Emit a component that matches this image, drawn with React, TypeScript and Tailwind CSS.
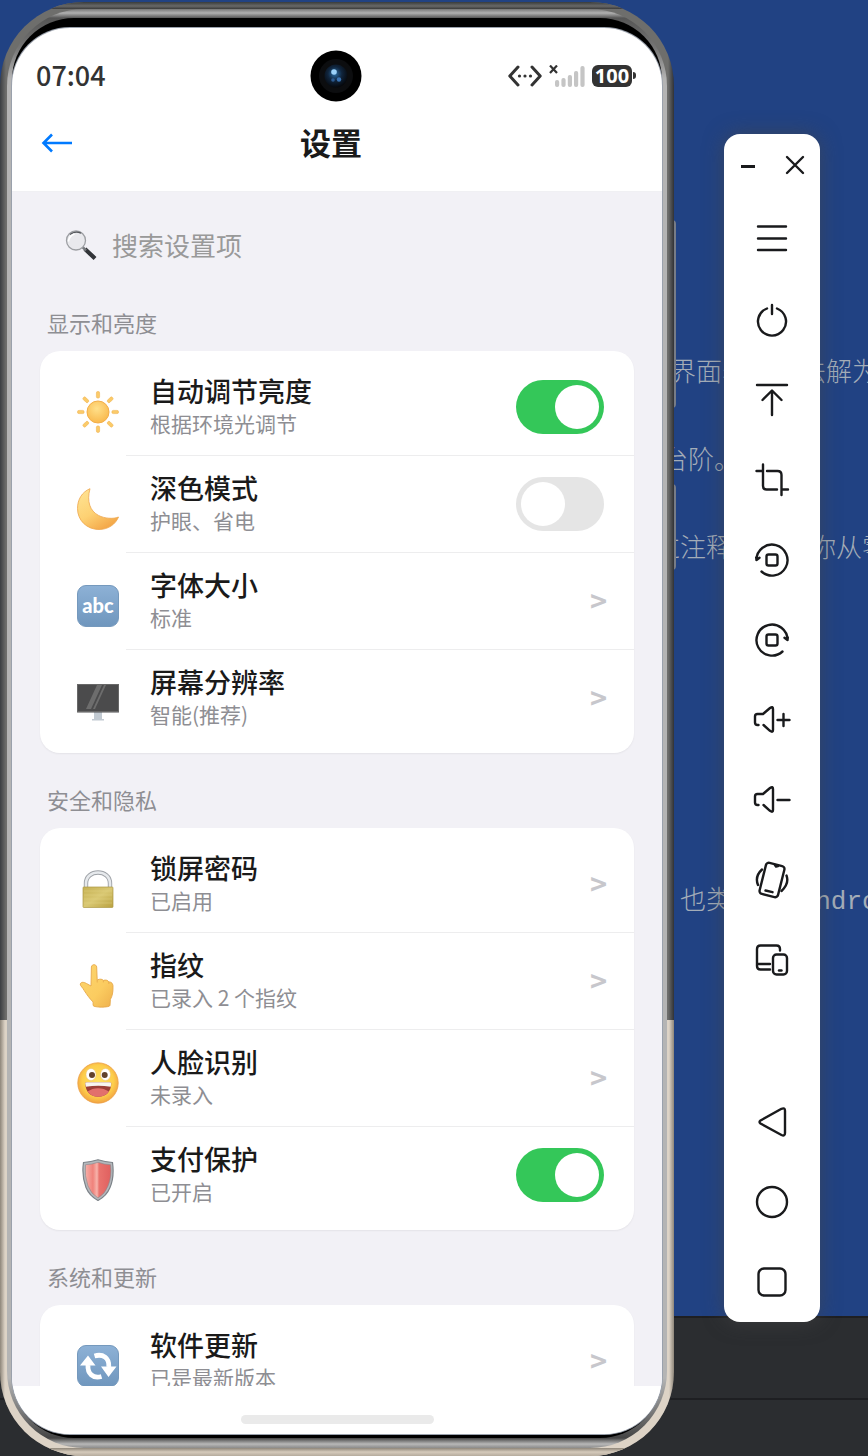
import React, { useState } from 'react';

interface SettingItem {
  id: string;
  title: string;
  desc: string;
  icon: React.ReactNode;
  toggle?: boolean;
}

interface SettingGroup {
  name: string;
  items: SettingItem[];
}

const SunIcon = () => (
  <svg viewBox="0 0 42 42" className="h-[42px] w-[42px]" aria-hidden="true">
    <defs>
      <radialGradient id="sun" cx="45%" cy="35%" r="65%">
        <stop offset="0" stopColor="#ffe08a" />
        <stop offset="1" stopColor="#f9b94d" />
      </radialGradient>
    </defs>
    <circle cx="21" cy="21" r="11" fill="url(#sun)" stroke="#f3ae49" strokeWidth="1" />
    {[0, 45, 90, 135, 180, 225, 270, 315].map((deg) => (
      <rect key={deg} x="19.4" y="0.5" width="3.2" height="6.6" rx="1.4" fill="#fbcb68" stroke="#f0b455" strokeWidth="0.6" transform={`rotate(${deg} 21 21)`} />
    ))}
  </svg>
);

const MoonIcon = () => (
  <svg viewBox="0 0 42 42" className="h-[42px] w-[42px]" aria-hidden="true">
    <defs>
      <linearGradient id="moon" x1="0" y1="0" x2="0.6" y2="1">
        <stop offset="0" stopColor="#ffe596" />
        <stop offset="0.6" stopColor="#fdd173" />
        <stop offset="1" stopColor="#f4a94a" />
      </linearGradient>
    </defs>
    <path d="M13 .7C5 4 .5 11.5 .5 20.5 .5 32.5 10 41.500 22 41.500c9 0 16.500-5 19.500-12.500-5 2.200-14 1.600-20-1.600C13 23 9.500 13.500 13 .7Z" fill="url(#moon)" stroke="#eda64d" strokeWidth="0.8" />
  </svg>
);

const BlueTile: React.FC<{ children: React.ReactNode }> = ({ children }) => (
  <svg viewBox="0 0 42 42" className="h-[42px] w-[42px]" aria-hidden="true">
    <defs>
      <linearGradient id="tile" x1="0" y1="0" x2="0" y2="1">
        <stop offset="0" stopColor="#8db1d6" />
        <stop offset="1" stopColor="#6f96bd" />
      </linearGradient>
    </defs>
    <rect x="0.5" y="0.5" width="41" height="41" rx="8.5" fill="url(#tile)" stroke="#7599bd" />
    {children}
  </svg>
);

const AbcIcon = () => (
  <BlueTile>
    <text x="21" y="28" textAnchor="middle" fill="#fff" fontFamily="Lato, 'Noto Sans', sans-serif" fontWeight="900" fontSize="20">
      abc
    </text>
  </BlueTile>
);

const RefreshIcon = () => (
  <BlueTile>
    <g fill="none" stroke="#fff" strokeWidth="4.8">
      <path d="M17.500 11C26 8.500 32.500 13 31.800 22" />
      <path d="M24.500 31.500C16 34 10.300 28.500 11 20" />
    </g>
    <path d="M3 20.500 11 10.500 18.500 20.500ZM24 21.500H39.500L31.500 32Z" fill="#fff" />
  </BlueTile>
);

const MonitorIcon = () => (
  <svg viewBox="0 0 42 42" className="h-[42px] w-[42px]" aria-hidden="true">
    <path d="M17 30h8v7h2v1.500H15V37h2Z" fill="#c2cad2" />
    <rect x="0" y="2" width="42" height="28.5" rx="0.6" fill="#4b4b4c" />
    <rect x="0.5" y="2.5" width="41" height="27" fill="none" stroke="#686868" />
    <path d="M20 3h5L14 27H9ZM27 3h2L18 27h-2Z" fill="#6d6d6d" />
  </svg>
);

const LockIcon = () => (
  <svg viewBox="0 0 42 42" className="h-[42px] w-[42px]" aria-hidden="true">
    <defs>
      <linearGradient id="brass" x1="0" y1="0" x2="1" y2="1">
        <stop offset="0" stopColor="#c5b052" />
        <stop offset="0.5" stopColor="#d9c873" />
        <stop offset="1" stopColor="#b9a13f" />
      </linearGradient>
    </defs>
    <path d="M9 20V15.500C9 0.800 33 0.800 33 15.500V20" fill="none" stroke="#9da1a6" strokeWidth="4.4" />
    <path d="M9 20V15.500C9 0.800 33 0.800 33 15.500V20" fill="none" stroke="#e6e9ec" strokeWidth="2.6" />
    <rect x="6" y="19" width="30" height="20.5" rx="0.8" fill="url(#brass)" stroke="#ae9a45" strokeWidth="0.7" />
    <path d="M7 23h28M7 27h28M7 31h28M7 35h28" stroke="#e2d38b" strokeWidth="0.4" />
  </svg>
);

const PointIcon = () => (
  <svg viewBox="0 0 42 44" className="h-[44px] w-[42px]" aria-hidden="true">
    <defs>
      <linearGradient id="hand" x1="0" y1="0" x2="1" y2="1">
        <stop offset="0" stopColor="#fcd56e" />
        <stop offset="0.6" stopColor="#fbcc60" />
        <stop offset="1" stopColor="#eeb04c" />
      </linearGradient>
    </defs>
    <path d="M14 22 14.400 3C14.700-.1 19.300-.1 19.700 3L20.200 16c2.600-1.400 5.300-.9 6.200.4 2.400-.8 4.600-.1 5.400 1.500 3.200-.1 4.500 2.200 4.200 5.500 0 5-.6 8.500-2.600 12l-.4 6c0 2.300-16.600 2.300-16.900 0V38C12.500 34.500 9.500 30 7.200 26.500 5.800 23.500 3.200 22 3.200 20c1-2.500 4-1.800 6.300-.5Z" fill="url(#hand)" stroke="#e6a84b" strokeWidth="0.9" />
    <path d="M20.200 16v2.500M26.400 16.400v2M31.800 17.900v2" stroke="#e6a84b" strokeWidth="0.8" />
  </svg>
);

const FaceIcon = () => (
  <svg viewBox="0 0 42 42" className="h-[42px] w-[42px]" aria-hidden="true">
    <defs>
      <radialGradient id="face" cx="50%" cy="45%" r="55%">
        <stop offset="0" stopColor="#ffe263" />
        <stop offset="0.7" stopColor="#fdce4b" />
        <stop offset="1" stopColor="#f2a342" />
      </radialGradient>
    </defs>
    <circle cx="21" cy="21" r="20.2" fill="url(#face)" stroke="#ec9f45" strokeWidth="0.8" />
    <ellipse cx="14" cy="12.5" rx="5" ry="6" fill="#fff" stroke="#e9c07a" strokeWidth="0.5" />
    <ellipse cx="28.5" cy="12.5" rx="5" ry="6" fill="#fff" stroke="#e9c07a" strokeWidth="0.5" />
    <circle cx="15" cy="13" r="3" fill="#62422d" />
    <circle cx="27.7" cy="13" r="3" fill="#62422d" />
    <path d="M8.200 21.500q0-1.300 1.800-1.300h22.500q1.800 0 1.800 1.300C34 29.500 29 34.800 21.200 34.800S8.500 29.500 8.200 21.500Z" fill="#9c3f38" />
    <path d="M8.200 21.500q0-1.300 1.800-1.300h22.500q1.800 0 1.800 1.300l-.6 3.300q-12.500-2-24.800 0Z" fill="#f7f5f0" />
    <path d="M10.500 29.500c6-4.500 15-4.500 21.500 0-2.800 3.700-6.200 5.300-10.800 5.300s-8.200-1.700-10.700-5.300Z" fill="#e2706c" />
  </svg>
);

const ShieldIcon = () => (
  <svg viewBox="0 0 42 42" className="h-[42px] w-[42px]" aria-hidden="true">
    <defs>
      <linearGradient id="shield" x1="0" y1="0" x2="1" y2="0">
        <stop offset="0" stopColor="#f6b0a9" />
        <stop offset="0.3" stopColor="#f0827b" />
        <stop offset="0.46" stopColor="#f7b4ac" />
        <stop offset="0.54" stopColor="#e9736e" />
        <stop offset="1" stopColor="#e0605f" />
      </linearGradient>
    </defs>
    <path d="M6.500 3.500Q14 3 21 .7 28 3 35.500 3.500 37.500 18 33 28.500 29.500 37 21 41.500 12.500 37 9 28.500 4.500 17 6.500 3.500Z" fill="#b4b8bc" stroke="#7d8389" strokeWidth="1.2" />
    <path d="M8.500 5.700Q15 5.500 21 3.300 27 5.500 33.500 5.700 35 18 31 27 28 35 21 39 14 35 11 27 7.200 17 8.500 5.700Z" fill="url(#shield)" stroke="#84898f" strokeWidth="0.6" />
  </svg>
);

const SearchIcon = () => (
  <svg viewBox="0 0 32 30" className="h-[30px] w-[32px] shrink-0" aria-hidden="true">
    <path d="M21.500 20.500 28.500 27" stroke="#333539" strokeWidth="4.2" strokeLinecap="square" />
    <path d="M17.500 17 21 20.500" stroke="#75787c" strokeWidth="2.5" />
    <circle cx="11" cy="10.5" r="9.5" fill="#e9e9ed" stroke="#9d9fa3" strokeWidth="1.3" />
    <path d="M5 4.500Q10 .5 16 3.200" fill="none" stroke="#55585c" strokeWidth="1.4" />
    <path d="M3.500 11.500Q4 6 9.500 4" fill="none" stroke="#fff" strokeWidth="1.5" />
  </svg>
);

const groups: SettingGroup[] = [
  {
    name: '显示和亮度',
    items: [
      { id: 'brightness', title: '自动调节亮度', desc: '根据环境光调节', icon: <SunIcon />, toggle: true },
      { id: 'dark', title: '深色模式', desc: '护眼、省电', icon: <MoonIcon />, toggle: false },
      { id: 'font', title: '字体大小', desc: '标准', icon: <AbcIcon /> },
      { id: 'resolution', title: '屏幕分辨率', desc: '智能(推荐)', icon: <MonitorIcon /> },
    ],
  },
  {
    name: '安全和隐私',
    items: [
      { id: 'password', title: '锁屏密码', desc: '已启用', icon: <LockIcon /> },
      { id: 'fingerprint', title: '指纹', desc: '已录入 2 个指纹', icon: <PointIcon /> },
      { id: 'face', title: '人脸识别', desc: '未录入', icon: <FaceIcon /> },
      { id: 'payment', title: '支付保护', desc: '已开启', icon: <ShieldIcon />, toggle: true },
    ],
  },
  {
    name: '系统和更新',
    items: [{ id: 'update', title: '软件更新', desc: '已是最新版本', icon: <RefreshIcon /> }],
  },
];

const SettingRow: React.FC<{ item: SettingItem; last: boolean }> = ({ item, last }) => {
  const [checked, setChecked] = useState(item.toggle ?? false);

  const content = (
    <>
      <span className="w-[86px] shrink-0 pt-2 pl-[37px]">{item.icon}</span>
      <span
        className={`flex h-full min-w-0 flex-1 items-center justify-between border-b pr-[30px] pl-6 ${
          last ? 'border-transparent' : 'border-[#ededee]'
        }`}
      >
        <span className="flex min-w-0 flex-col whitespace-nowrap">
          <span className="text-[27px] leading-8 font-medium text-[#1a1a1a]">{item.title}</span>
          <span className="text-[21px] leading-8 text-[#8e8e93]">{item.desc}</span>
        </span>
        {item.toggle !== undefined ? (
          <input
            type="checkbox"
            checked={checked}
            onChange={(e) => setChecked(e.target.checked)}
            className="h-[54px] w-[88px] shrink-0 appearance-none rounded-full bg-[#e5e5e5] p-[5px] before:block before:h-11 before:w-11 before:rounded-full before:bg-white before:content-[''] checked:bg-[#34c759] checked:before:ml-[34px]"
          />
        ) : (
          <span className="-mr-[3px] pb-1 text-[29px] leading-8 font-bold text-[#c7c7cc]">&gt;</span>
        )}
      </span>
    </>
  );

  if (item.toggle !== undefined) {
    return <label className="flex h-[97px] items-center">{content}</label>;
  }
  return (
    <button type="button" className="flex h-[97px] w-full items-center text-left">
      {content}
    </button>
  );
};

const StatusBar = () => (
  <div className="grid h-24 grid-cols-[1fr_auto_1fr] items-center pr-[26px] pb-px pl-6">
    <span className="pb-[2px] text-[27px] leading-8 font-medium text-[#333]">07:04</span>
    <svg viewBox="0 0 52 52" className="h-[52px] w-[52px]" aria-hidden="true">
      <defs>
        <radialGradient id="lens" cx="45%" cy="40%" r="60%">
          <stop offset="0" stopColor="#2b6fa8" />
          <stop offset="0.5" stopColor="#10253d" />
          <stop offset="1" stopColor="#06080c" />
        </radialGradient>
      </defs>
      <circle cx="26" cy="26" r="25.5" fill="#000" />
      <circle cx="26" cy="26" r="17" fill="#0c0d0f" />
      <circle cx="26" cy="26" r="11.5" fill="url(#lens)" />
      <circle cx="24" cy="22" r="2.8" fill="#9bd2fa" />
      <circle cx="29" cy="29.5" r="2.2" fill="#3a74b4" />
      <circle cx="23" cy="30" r="1.8" fill="#2b5a90" />
    </svg>
    <div className="flex items-center justify-end gap-[7px]">
      <svg viewBox="0 0 34 22" className="h-[22px] w-[34px]" aria-hidden="true">
        <path d="M10 2 1.800 11 10 20M24 2l8.200 9L24 20" fill="none" stroke="#333" strokeWidth="3" strokeLinecap="round" strokeLinejoin="round" />
        <circle cx="11.5" cy="11" r="1.6" fill="#333" />
        <circle cx="17" cy="11" r="1.6" fill="#333" />
        <circle cx="22.5" cy="11" r="1.6" fill="#333" />
      </svg>
      <svg viewBox="0 0 36 22" className="h-[22px] w-9" aria-hidden="true">
        <path d="M1 .5 8 8M8 .5 1 8" stroke="#333" strokeWidth="2.2" />
        <g fill="#c5c5c5">
          <rect x="6" y="15" width="4.2" height="7" rx="2" />
          <rect x="12.4" y="13" width="4.2" height="9" rx="2" />
          <rect x="18.8" y="10" width="4.2" height="12" rx="2" />
          <rect x="25" y="6" width="4.2" height="16" rx="2" />
          <rect x="31.4" y="1" width="4.2" height="21" rx="2" />
        </g>
      </svg>
      <div className="flex items-center gap-px">
        <span className="flex h-[22px] w-[40px] items-center justify-center rounded-[6px] bg-[#333] font-['Noto_Sans',sans-serif] text-[20px] leading-none font-bold text-white">
          100
        </span>
        <span className="h-[7px] w-[3px] rounded-r-full bg-[#333]" />
      </div>
    </div>
  </div>
);

const Phone = () => {
  const [keyword, setKeyword] = useState('');

  return (
    <div className="relative h-full min-w-0 flex-1 pt-[2px] font-['Noto_Sans_CJK_SC',sans-serif]">
      <span className="absolute top-[220px] -right-[2px] h-[188px] w-1 rounded-r bg-[#777c86]" />
      <span className="absolute top-[484px] -right-[2px] h-[86px] w-1 rounded-r bg-[#777c86]" />
      {/* metal frame */}
      <div className="relative h-full overflow-hidden rounded-[84px] bg-[linear-gradient(90deg,#3b3e42,#6e6e6c_6px,#6e6e6c_calc(100%-6px),#303236)]">
        <div className="absolute inset-x-0 bottom-0 h-[30%] bg-[linear-gradient(90deg,#8e867a,#ddd3c6_5px,#ddd3c6_calc(100%-5px),#8e867a)]" />
        <div className="absolute inset-x-0 bottom-0 h-2 bg-[linear-gradient(#8f8679,#d5cabb_4px,#b5ab9d)]" />
        <div className="absolute inset-x-0 top-0 h-[7px] bg-[linear-gradient(#3a3c3c,#686868_4px,#3b3b3b)]" />
        <div className="relative h-full px-[7px] pt-[7px] pb-[8px]">
          <div className="h-full rounded-[77px] bg-[linear-gradient(#777,#b0b0b0_4px,#555_9px,#777_40px,#b4b4b4_70px,#b4b4b4_calc(100%-70px),#777_calc(100%-35px),#444_calc(100%-10px),#b8b8b8_calc(100%-4px),#8b8b8b)] px-[5px] pt-[9px] pb-[10px]">
            <div className="h-full rounded-[62px] bg-black pt-[10px] pb-1">
              <div className="flex h-full flex-col overflow-hidden rounded-[58px] bg-white shadow-[0_0_0_1px_#9aa1ac]">
                <header className="shrink-0 border-b border-[#f0f0f3] pb-[31px]">
                  <StatusBar />
                  <div className="grid h-9 grid-cols-[1fr_auto_1fr] items-center pr-10 pl-7">
                    <button type="button" aria-label="返回" className="w-9 text-[#007aff]">
                      <svg viewBox="0 0 36 24" className="h-6 w-9" fill="none" stroke="currentColor" strokeWidth="2.6">
                        <path d="M12 3.500 3.500 12 12 20.500M3.500 12H32" />
                      </svg>
                    </button>
                    <h1 className="pb-[2px] text-[31px] leading-9 font-bold text-[#1a1a1a]">设置</h1>
                  </div>
                </header>

                <main className="min-h-0 flex-1 overflow-hidden bg-[#f2f1f6] px-7 pt-[18px]">
                  <label className="flex h-[70px] items-center gap-[15px] pl-[25px]">
                    <SearchIcon />
                    <input
                      type="text"
                      aria-label="搜索设置项"
                      placeholder="搜索设置项"
                      value={keyword}
                      onChange={(e) => setKeyword(e.target.value)}
                      className="min-w-0 flex-1 bg-transparent text-[26px] leading-9 text-[#1a1a1a] outline-none placeholder:text-[#999]"
                    />
                  </label>
                  {groups.map((group) => (
                    <section key={group.name} className="mb-[31px] first-of-type:mt-[27px]">
                      <h2 className="mb-[14px] pl-[7px] text-[22px] leading-[30px] text-[#8e8e93]">{group.name}</h2>
                      <div className="rounded-[20px] bg-white pt-2 pb-[6px] shadow-[0_1px_2px_rgba(0,0,0,0.06)]">
                        {group.items.map((item, index) => (
                          <SettingRow key={item.id} item={item} last={index === group.items.length - 1} />
                        ))}
                      </div>
                    </section>
                  ))}
                </main>

                <div className="flex h-12 shrink-0 justify-center bg-white pt-[29px]">
                  <span className="h-[9px] w-[193px] rounded-full bg-[#eaeaea]" />
                </div>
              </div>
            </div>
          </div>
        </div>
      </div>
    </div>
  );
};

const tools = [
  { label: '菜单', icon: <path d="M6 6.500h28M6 18.500h28M6 30h28" /> },
  { label: '电源', icon: <path d="M20 5v9M15 8.500a14 14 0 1 0 10 0" /> },
  { label: '主屏幕', icon: <path d="M5 5h30M20 35V11M10.500 20 20 10.500 29.500 20" /> },
  { label: '截屏', icon: <path d="M4.500 11h6.500M11 4.500V26q0 3.500 3.500 3.500H25M15 11h10.500q4 0 4 4v20M29.500 29.500H36" /> },
  {
    label: '向左旋转',
    icon: (
      <>
        <path d="M4.500 20A15.500 15.500 0 1 1 9.500 31.500M4.500 20l-.3-2.500M4.500 20l3-2.300" />
        <rect x="14.5" y="14.5" width="11" height="11" rx="2" />
      </>
    ),
  },
  {
    label: '向右旋转',
    icon: (
      <>
        <path d="M35.500 20A15.500 15.500 0 1 0 30.500 31.500M35.500 20l.3-2.500M35.500 20l-3-2.300" />
        <rect x="14.5" y="14.5" width="11" height="11" rx="2" />
      </>
    ),
  },
  { label: '音量加', icon: <path d="M6.500 25H5.500q-2.500 0-2.500-2.500v-6Q3 14 5.500 14H11l7-6q3-2 3 1v21q0 3-3 .8L11.500 25M25.500 20h12M31.500 14v12" /> },
  { label: '音量减', icon: <path d="M6.500 25H5.500q-2.500 0-2.500-2.500v-6Q3 14 5.500 14H11l7-6q3-2 3 1v21q0 3-3 .8L11.500 25M25.500 20h12" /> },
  {
    label: '摇一摇',
    icon: (
      <>
        <rect x="10.5" y="4" width="19" height="32" rx="3" transform="rotate(14 20 20)" />
        <path d="M13.500 30.500l7 1.700M23 5l1 1.500 2-.5M10 9.500q-7.500 7-4 15.500M34.500 15.500q3 8-5 15.500" />
      </>
    ),
  },
  {
    label: '多设备',
    icon: (
      <>
        <path d="M28 10.500V9q0-3.500-3.500-3.500h-16Q5 5.500 5 9v17q0 3.500 3.500 3.500H18M5 24h13" />
        <rect x="21" y="14.5" width="14" height="20" rx="3.5" />
        <path d="M27 30.500h2.500" />
      </>
    ),
  },
];

const navTools = [
  { label: '返回键', icon: <path d="M8.500 18.500 29.500 6.800q3.500-1.500 3.500 2V31q0 3.500-3.500 2L8.500 21.500q-2-1.500 0-3Z" /> },
  { label: '主页键', icon: <circle cx="20" cy="20" r="15" /> },
  { label: '任务键', icon: <rect x="6.5" y="6.5" width="27" height="27" rx="5.5" /> },
];

const ToolButton: React.FC<{ label: string; children: React.ReactNode }> = ({ label, children }) => (
  <button type="button" aria-label={label} className="flex h-20 w-full items-center justify-center">
    <svg viewBox="0 0 40 40" className="h-10 w-10" fill="none" stroke="currentColor" strokeWidth="2.4" strokeLinecap="round" strokeLinejoin="round">
      {children}
    </svg>
  </button>
);

const Toolbar = () => (
  <aside className="mt-[134px] mr-12 ml-[50px] w-24 shrink-0 self-start rounded-2xl bg-white text-[#191a1c] shadow-[0_0_20px_rgba(70,70,70,0.6)]">
    <div className="mb-1 flex h-[62px] items-center justify-between pr-[13px] pl-3">
      <button type="button" aria-label="最小化">
        <svg viewBox="0 0 24 24" className="h-6 w-6" stroke="currentColor" strokeWidth="3">
          <path d="M5 13.500h14" />
        </svg>
      </button>
      <button type="button" aria-label="关闭">
        <svg viewBox="0 0 24 24" className="h-6 w-6" stroke="currentColor" strokeWidth="2.4" strokeLinecap="round">
          <path d="M4 4l16 16M20 4 4 20" />
        </svg>
      </button>
    </div>
    {tools.map((tool) => (
      <ToolButton key={tool.label} label={tool.label}>
        {tool.icon}
      </ToolButton>
    ))}
    <div className="mt-[82px]">
      {navTools.map((tool) => (
        <ToolButton key={tool.label} label={tool.label}>
          {tool.icon}
        </ToolButton>
      ))}
    </div>
  </aside>
);

// Selected text of the editor that lies under the emulator windows
const Editor = () => (
  <div className="absolute inset-0 flex flex-col overflow-hidden font-['Liberation_Mono','Noto_Sans_CJK_SC',monospace]">
    <div className="min-h-0 flex-1 overflow-hidden bg-[#214283] pt-[330px] text-[26px] leading-[88px] font-light whitespace-pre text-[#a4adb8]">
      <p className="pl-[670px]">界面表达方法解为</p>
      <p className="pl-[662px]">台阶。</p>
      <p className="pl-[654px]">过注释，带着你从零</p>
      <p className="mt-[264px] pl-[680px]">也类似于 Android</p>
    </div>
    <div className="h-[84px] shrink-0 border-y-2 border-[#1e1f22] bg-[#2b2d30]" />
    <div className="h-14 shrink-0 bg-[#2b2d30]" />
  </div>
);

const App: React.FC = () => (
  <div className="relative h-screen overflow-hidden">
    <Editor />
    <div className="relative flex h-full">
      <Phone />
      <Toolbar />
    </div>
  </div>
);

export default App;
